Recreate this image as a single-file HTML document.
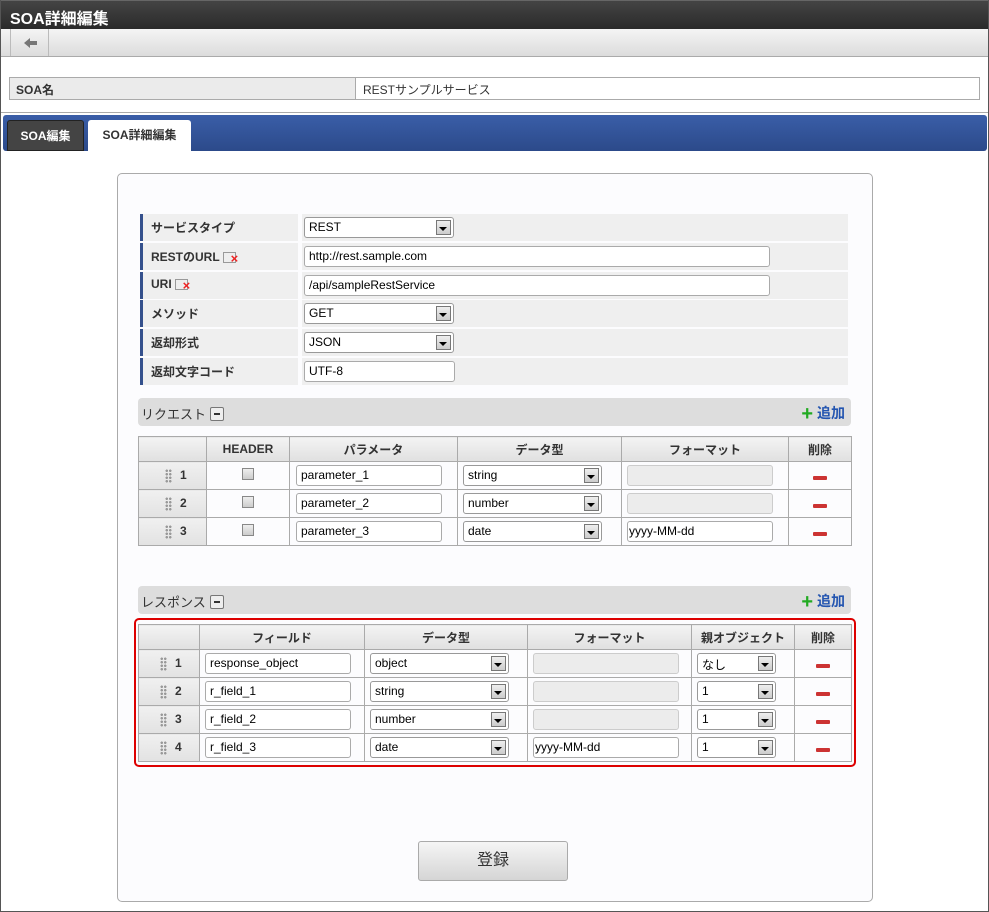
<!DOCTYPE html>
<html><head><meta charset="utf-8"><style>
*{box-sizing:border-box;margin:0;padding:0}
body{width:989px;height:912px;position:relative;background:#fff;font-family:"Liberation Sans","Noto Sans CJK JP",sans-serif;font-size:12px;color:#333;overflow:hidden}
.a{position:absolute}
.frame{left:0;top:0;width:989px;height:912px;border:1px solid #555;border-top:none}
.hdr{left:0;top:0;width:989px;height:29px;background:linear-gradient(#444,#2a2a2a);border-top:1px solid #666}
.hdr span{position:absolute;left:10px;top:4px;color:#fff;font-weight:bold;font-size:16px}
.tb{left:1px;top:29px;width:987px;height:28px;background:linear-gradient(#f4f4f4,#dcdcdc);border-bottom:1px solid #aaa}
.back{left:10px;top:29px;width:39px;height:27px;border-left:1px solid #bbb;border-right:1px solid #bbb}
.soa{left:9px;top:77px;width:971px;height:23px;border:1px solid #aaa;background:#fff}
.soa .l{position:absolute;left:0;top:0;width:346px;height:21px;background:#ebebeb;border-right:1px solid #aaa;font-weight:bold;padding:3px 6px}
.soa .v{position:absolute;left:353px;top:3px}
.line{left:1px;top:112px;width:987px;height:1px;background:#aaa}
.blue{left:3px;top:115px;width:984px;height:36px;background:linear-gradient(#3a5ea8,#2c4a8a);border-radius:3px}
.t1{left:7px;top:120px;width:77px;height:31px;background:#444;color:#fff;font-weight:bold;border-radius:3px 3px 0 0;text-align:center;line-height:31px;border:1px solid #222}
.t2{left:88px;top:120px;width:103px;height:31px;background:#fff;font-weight:bold;border-radius:3px 3px 0 0;text-align:center;line-height:31px}
.panel{left:117px;top:173px;width:756px;height:729px;background:#fcfcfe;border:1px solid #aaa;border-radius:5px}
.lab{left:140px;width:158px;height:27px;background:#efefef;border-left:3px solid #34508c;font-weight:bold;padding:5px 8px}
.val{left:302px;width:546px;height:27px;background:#efefef}
.inp{position:absolute;height:21px;background:#fff;border:1px solid #aaa;border-radius:3px;padding:2px 4px;color:#000;white-space:nowrap;overflow:hidden}
.inp.dis{background:#ececec;border-color:#ccc}
.sel{position:absolute;height:21px;background:#fff;border:1px solid #999;border-radius:3px;padding:2px 4px;color:#000}
.sel:after{content:"";position:absolute;right:2px;top:2px;width:15px;height:15px;background:linear-gradient(#eee,#ccc);border:1px solid #777;box-sizing:border-box}
.sel i{position:absolute;right:6px;top:9px;border:4px solid transparent;border-top:4px solid #000;z-index:2;border-bottom:0}
.bar{left:138px;width:713px;height:28px;background:#ddd;border-radius:4px;font-size:13px;padding:6px 3px}
.minus{display:inline-block;width:14px;height:14px;border:1px solid #777;background:#eee;vertical-align:-2px;margin-left:4px;position:relative;border-radius:2px}
.minus:after{content:"";position:absolute;left:3px;top:5px;width:6px;height:2px;background:#333}
.add{position:absolute;right:6px;top:5px;color:#2355b0;font-weight:bold;font-size:14px}
.add b{color:#2a2;font-size:20px;line-height:12px;vertical-align:-2px}
table{position:absolute;border-collapse:collapse;table-layout:fixed}
td,th{border:1px solid #aaa;height:28px;text-align:center;position:relative}
th{background:linear-gradient(#f3f3f3,#e0e0e0);font-weight:bold;height:25px}
td.n{background:linear-gradient(#f0f0f0,#e2e2e2);font-weight:bold;text-align:left}
td.n b{position:absolute;top:6px}
td.n:before{content:"";position:absolute;top:7px;width:7px;height:14px;background:radial-gradient(circle,#999 1.2px,transparent 1.4px) 0 0/3.5px 3.5px}
td.n.r:before{left:26px} td.n.r b{left:41px}
td.n.s:before{left:21px} td.n.s b{left:36px}
.ck{display:inline-block;width:12px;height:12px;border:1px solid #888;background:linear-gradient(#eee,#ccc)}
.del{display:inline-block;width:14px;height:4px;background:#c33;border-radius:1px}
.red{left:134px;top:618px;width:722px;height:149px;border:2px solid #d00;border-radius:5px}
.btn{left:418px;top:841px;width:150px;height:40px;border:1px solid #aaa;border-radius:3px;background:linear-gradient(#f5f5f5,#d5d5d5);text-align:center;line-height:38px;font-size:16px}
.ic{display:inline-block;width:13px;height:11px;border:1px solid #999;background:#eee;position:relative;vertical-align:-2px;margin-left:3px}
.ic:after{content:"×";position:absolute;left:7px;top:1px;color:#e22;font-weight:bold;font-size:13px;line-height:10px}
</style></head><body>
<div class="a hdr"><span>SOA詳細編集</span></div>
<div class="a tb"></div>
<div class="a back"><svg width="39" height="27"><path d="M13 14 L19 9 L19 12 L26 12 L26 16 L19 16 L19 19 Z" fill="#777"/></svg></div>
<div class="a soa"><div class="l">SOA名</div><div class="v">RESTサンプルサービス</div></div>
<div class="a line"></div>
<div class="a blue"></div>
<div class="a t1">SOA編集</div>
<div class="a t2">SOA詳細編集</div>
<div class="a panel"></div>

<div class="a lab" style="top:214px">サービスタイプ</div><div class="a val" style="top:214px"><div class="sel" style="left:2px;top:3px;width:150px">REST<i></i></div></div>
<div class="a lab" style="top:243px">RESTのURL<span class="ic"></span></div><div class="a val" style="top:243px"><div class="inp" style="left:2px;top:3px;width:466px">http://rest.sample.com</div></div>
<div class="a lab" style="top:272px">URI<span class="ic"></span></div><div class="a val" style="top:272px"><div class="inp" style="left:2px;top:3px;width:466px">/api/sampleRestService</div></div>
<div class="a lab" style="top:300px">メソッド</div><div class="a val" style="top:300px"><div class="sel" style="left:2px;top:3px;width:150px">GET<i></i></div></div>
<div class="a lab" style="top:329px">返却形式</div><div class="a val" style="top:329px"><div class="sel" style="left:2px;top:3px;width:150px">JSON<i></i></div></div>
<div class="a lab" style="top:358px">返却文字コード</div><div class="a val" style="top:358px"><div class="inp" style="left:2px;top:3px;width:151px">UTF-8</div></div>

<div class="a bar" style="top:398px">リクエスト<span class="minus"></span><span class="add"><b>+</b> 追加</span></div>
<table style="left:138px;top:436px;width:713px">
<colgroup><col style="width:68px"><col style="width:83px"><col style="width:168px"><col style="width:164px"><col style="width:167px"><col style="width:63px"></colgroup>
<tr><th></th><th>HEADER</th><th>パラメータ</th><th>データ型</th><th>フォーマット</th><th>削除</th></tr>
<tr><td class="n r"><b>1</b></td><td><span class="ck"></span></td><td><div class="inp" style="left:6px;top:3px;width:146px;text-align:left">parameter_1</div></td><td><div class="sel" style="left:5px;top:3px;width:139px;text-align:left">string<i></i></div></td><td><div class="inp dis" style="left:5px;top:3px;width:146px"></div></td><td><span class="del"></span></td></tr>
<tr><td class="n r"><b>2</b></td><td><span class="ck"></span></td><td><div class="inp" style="left:6px;top:3px;width:146px;text-align:left">parameter_2</div></td><td><div class="sel" style="left:5px;top:3px;width:139px;text-align:left">number<i></i></div></td><td><div class="inp dis" style="left:5px;top:3px;width:146px"></div></td><td><span class="del"></span></td></tr>
<tr><td class="n r"><b>3</b></td><td><span class="ck"></span></td><td><div class="inp" style="left:6px;top:3px;width:146px;text-align:left">parameter_3</div></td><td><div class="sel" style="left:5px;top:3px;width:139px;text-align:left">date<i></i></div></td><td><div class="inp" style="left:5px;top:3px;width:146px;text-align:left;padding-left:1px">yyyy-MM-dd</div></td><td><span class="del"></span></td></tr>
</table>

<div class="a bar" style="top:586px">レスポンス<span class="minus"></span><span class="add"><b>+</b> 追加</span></div>
<div class="a red"></div>
<table style="left:138px;top:624px;width:713px">
<colgroup><col style="width:61px"><col style="width:165px"><col style="width:163px"><col style="width:164px"><col style="width:103px"><col style="width:57px"></colgroup>
<tr><th></th><th>フィールド</th><th>データ型</th><th>フォーマット</th><th>親オブジェクト</th><th>削除</th></tr>
<tr><td class="n s"><b>1</b></td><td><div class="inp" style="left:5px;top:3px;width:146px;text-align:left">response_object</div></td><td><div class="sel" style="left:5px;top:3px;width:139px;text-align:left">object<i></i></div></td><td><div class="inp dis" style="left:5px;top:3px;width:146px"></div></td><td><div class="sel" style="left:5px;top:3px;width:79px;text-align:left">なし<i></i></div></td><td><span class="del"></span></td></tr>
<tr><td class="n s"><b>2</b></td><td><div class="inp" style="left:5px;top:3px;width:146px;text-align:left">r_field_1</div></td><td><div class="sel" style="left:5px;top:3px;width:139px;text-align:left">string<i></i></div></td><td><div class="inp dis" style="left:5px;top:3px;width:146px"></div></td><td><div class="sel" style="left:5px;top:3px;width:79px;text-align:left">1<i></i></div></td><td><span class="del"></span></td></tr>
<tr><td class="n s"><b>3</b></td><td><div class="inp" style="left:5px;top:3px;width:146px;text-align:left">r_field_2</div></td><td><div class="sel" style="left:5px;top:3px;width:139px;text-align:left">number<i></i></div></td><td><div class="inp dis" style="left:5px;top:3px;width:146px"></div></td><td><div class="sel" style="left:5px;top:3px;width:79px;text-align:left">1<i></i></div></td><td><span class="del"></span></td></tr>
<tr><td class="n s"><b>4</b></td><td><div class="inp" style="left:5px;top:3px;width:146px;text-align:left">r_field_3</div></td><td><div class="sel" style="left:5px;top:3px;width:139px;text-align:left">date<i></i></div></td><td><div class="inp" style="left:5px;top:3px;width:146px;text-align:left;padding-left:1px">yyyy-MM-dd</div></td><td><div class="sel" style="left:5px;top:3px;width:79px;text-align:left">1<i></i></div></td><td><span class="del"></span></td></tr>
</table>

<div class="a btn">登録</div>
<div class="a frame"></div>
</body></html>
